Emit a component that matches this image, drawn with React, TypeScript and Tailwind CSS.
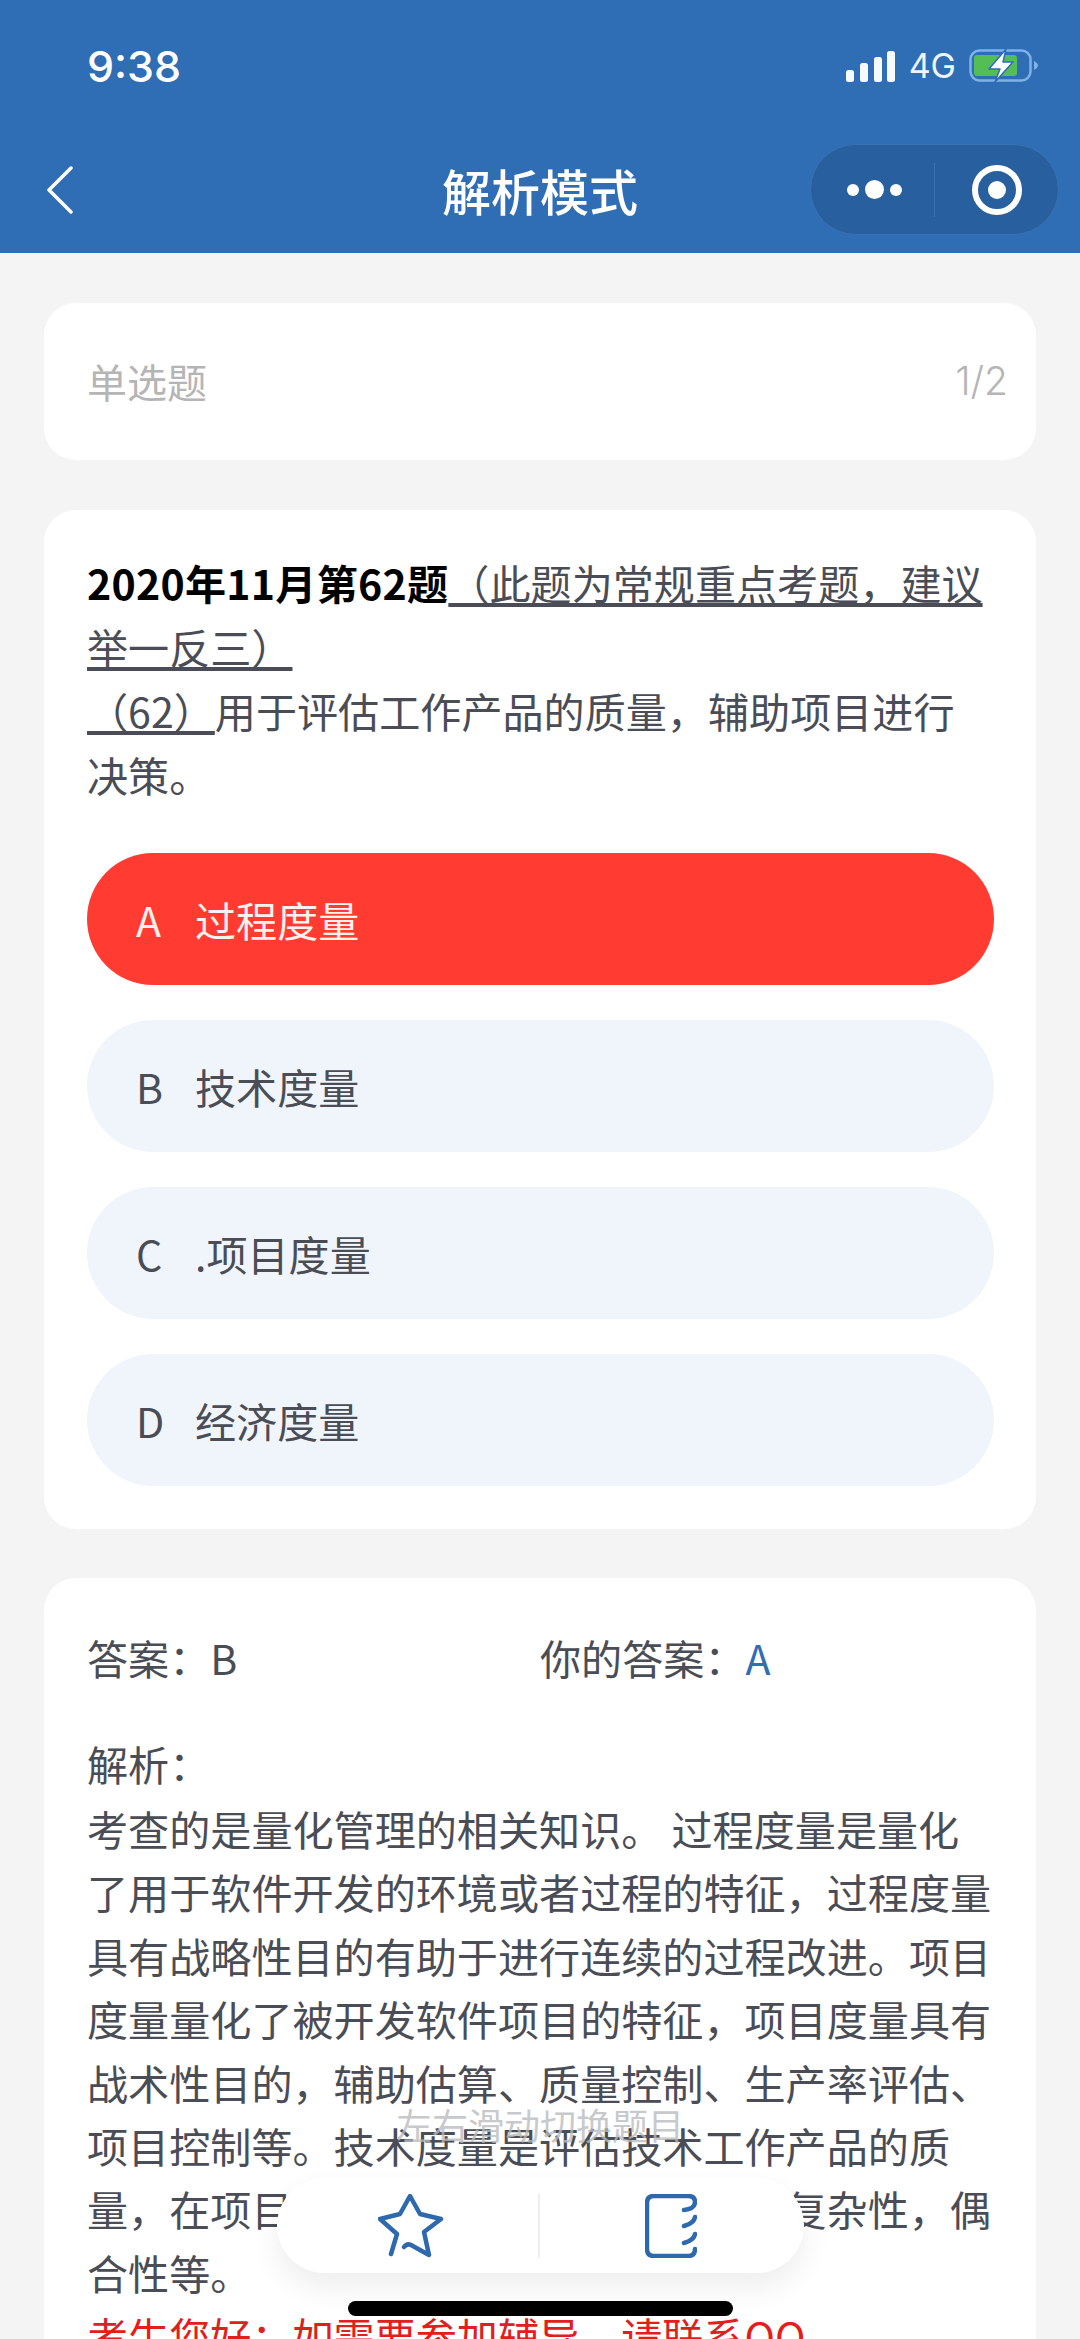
import React from 'react';

const options = [
  { key: 'A', text: '过程度量', picked: true },
  { key: 'B', text: '技术度量', picked: false },
  { key: 'C', text: '.项目度量', picked: false },
  { key: 'D', text: '经济度量', picked: false },
];

const StatusIcons = () => (
  <div className="flex items-center gap-[13px]">
    <svg width="50" height="32" viewBox="0 0 50 32" fill="#f6fafd">
      <rect x="0" y="20" width="8" height="12" rx="2.5" />
      <rect x="14" y="13" width="8" height="19" rx="2.5" />
      <rect x="28" y="7" width="8" height="25" rx="2.5" />
      <rect x="41" y="1" width="8" height="31" rx="2.5" />
    </svg>
    <span className="text-[34px] leading-none text-[#eef4fb] font-['Inter','Noto_Sans_CJK_SC',sans-serif]">4G</span>
    <svg width="69" height="36" viewBox="0 0 69 36" fill="none">
      <rect x="1.5" y="2.5" width="60" height="30" rx="9" stroke="#7fb3e8" strokeWidth="2.5" />
      <rect x="5" y="7" width="43" height="21" rx="3" fill="#54bd55" />
      <path d="M65 13v9c2-1 4-3 4-4.500s-2-3.500-4-4.500z" fill="#7fb3e8" />
      <path d="M37 1 20 21h11l-5 13 18-20H34z" fill="#fdfefe" stroke="#2f6db5" strokeWidth="1.5" strokeLinejoin="round" />
    </svg>
  </div>
);

const Capsule = () => (
  <div className="flex h-[91px] w-[249px] items-center rounded-full border border-[#3a73b3] bg-[#285f9f]">
    <div className="flex h-[54px] w-[124px] items-center justify-center gap-[6px] border-r border-[#3a70ad] pl-[4px]">
      <span className="size-[12px] rounded-full bg-white" />
      <span className="size-[19px] rounded-full bg-white" />
      <span className="size-[12px] rounded-full bg-white" />
    </div>
    <div className="flex flex-1 items-center justify-center">
      <div className="flex size-[50px] items-center justify-center rounded-full border-[6px] border-white">
        <span className="size-[18px] rounded-full bg-white" />
      </div>
    </div>
  </div>
);

const App: React.FC = () => {
  return (
    <div className="relative h-[2339px] w-[1080px] overflow-hidden bg-[#f4f4f4] font-['Noto_Sans_CJK_SC',sans-serif] text-[41.1px] leading-[64px] text-[#4a4d55]">
      <header className="h-[253px] bg-[#2f6db5] text-white">
        <div className="flex h-[132px] items-center justify-between pl-[87px] pr-[42px]">
          <span className="text-[43px] font-medium leading-none font-['Inter',sans-serif]">9:38</span>
          <StatusIcons />
        </div>
        <div className="relative mt-[12px] flex h-[91px] items-center justify-end pr-[21px]">
          <svg className="absolute left-[45px] top-[22px]" width="30" height="48" viewBox="0 0 30 48" fill="none">
            <path d="M26 2 4 24l22 22" stroke="#fff" strokeWidth="3.5" strokeLinecap="round" strokeLinejoin="round" />
          </svg>
          <h1 className="absolute inset-x-0 text-center text-[49px] font-medium leading-none">解析模式</h1>
          <Capsule />
        </div>
      </header>

      <main className="flex flex-col px-[44px] pt-[50px]">
        <section className="flex h-[157px] items-center justify-between rounded-[32px] bg-white pb-[2px] pl-[43px] pr-[28px] text-[#b5b5b5]">
          <span className="text-[40px]">单选题</span>
          <span className="text-[39px] font-light font-['Inter',sans-serif]">1/2</span>
        </section>

        <section className="mt-[50px] rounded-[32px] bg-white pb-[43px] pl-[43px] pr-[42px] pt-[40px]">
          <p>
            <span className="font-bold tracking-[0.25px] text-black">2020年11月第62题</span>
            <span className="underline">（此题为常规重点考题，建议举一反三）</span>
            <br />
            <span className="underline">（62）</span>用于评估工作产品的质量，辅助项目进行决策。
          </p>
          <div className="mt-[47px] flex flex-col gap-[35px]">
            {options.map(o => (
              <div
                key={o.key}
                className={
                  o.picked
                    ? 'flex h-[132px] items-center rounded-full bg-[#ff3b32] pl-[49px] text-[#fff1ec]'
                    : 'flex h-[132px] items-center rounded-full bg-[#f0f5fc] pl-[49px] text-[#4a4d55]'
                }
              >
                <span className="w-[59px]">{o.key}</span>
                <span>{o.text}</span>
              </div>
            ))}
          </div>
        </section>

        <section className="mt-[49px] rounded-[32px] bg-white pb-[43px] pl-[43px] pr-[42px] pt-[47px]">
          <div className="flex">
            <span className="w-[453px]">答案：B</span>
            <span>
              你的答案：<span className="text-[#2f6db5]">A</span>
            </span>
          </div>
          <p className="mt-[42px]">解析：</p>
          <p className="mt-[2px] leading-[63.4px]">
            考查的是量化管理的相关知识。 过程度量是量化了用于软件开发的环境或者过程的特征，过程度量具有战略性目的有助于进行连续的过程改进。项目度量量化了被开发软件项目的特征，项目度量具有战术性目的，辅助估算、质量控制、生产率评估、项目控制等。技术度量是评估技术工作产品的质量，在项目
            <span className="inline-block w-[493px]" />
            复杂性，偶合性等。
          </p>
          <p className="leading-[63.4px] text-[#e0201c]">考生您好：如需要参加辅导，请联系QQ</p>
        </section>
      </main>

      <div className="absolute inset-x-0 top-[2099px] text-center text-[36px] leading-[50px] text-[#b9bbbe]/80">左右滑动切换题目</div>

      <div className="absolute left-[277px] top-[2178px] flex h-[95px] w-[527px] items-center rounded-full bg-white shadow-[0_14px_30px_rgba(0,0,0,0.07)]">
        <div className="flex h-[64px] w-[263px] items-center justify-center border-r-2 border-[#eeeeee] pl-[6px]">
          <svg width="66" height="64" viewBox="0 0 66 64" fill="none">
            <path
              d="M26 53Q29 49 33 51L51 61 46 38 63 25 42 20 32 2 22 20 2 25 19 40 13 60"
              stroke="#2f69ad"
              strokeWidth="4.500"
              strokeLinecap="round"
              strokeLinejoin="round"
            />
          </svg>
        </div>
        <div className="flex flex-1 items-center justify-center pr-[2px]">
          <svg width="52" height="64" viewBox="0 0 52 64" fill="none" stroke="#2f69ad" strokeWidth="4.500" strokeLinecap="round">
            <path d="M39 16Q50 15 50 8 50 2 43 2H9Q2 2 2 9V55Q2 62 9 62H43Q50 62 50 55" />
            <path d="M50 23Q49 29 39 32M50 40Q49 46 39 49" />
          </svg>
        </div>
      </div>

      <div className="absolute left-[348px] top-[2301px] h-[15px] w-[385px] rounded-full bg-black" />
    </div>
  );
};

export default App;
